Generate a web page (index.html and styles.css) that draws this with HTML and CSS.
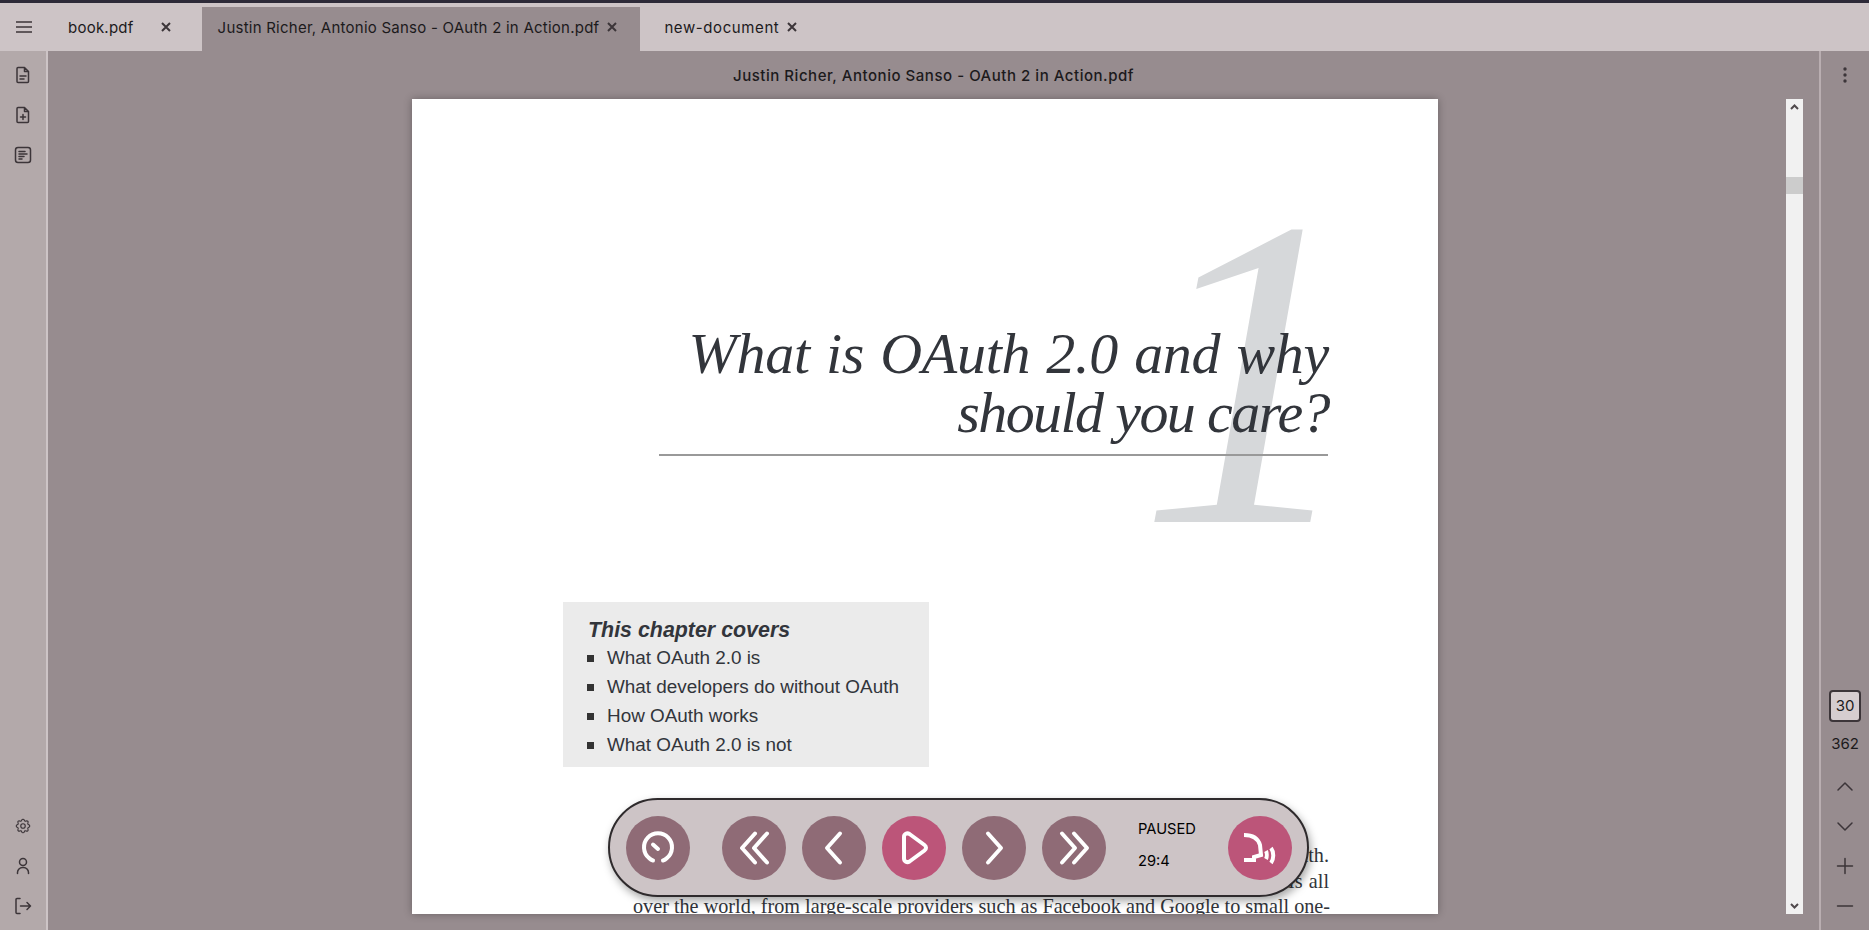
FILE: index.html
```html
<!DOCTYPE html>
<html lang="en">
<head>
    <meta charset="UTF-8">
    <title>OAuth 2 in Action.pdf</title>
    <link rel="stylesheet" href="styles.css">
</head>
<body>
    <div class="top-stripe"></div>

    <header class="tabbar">
        <button class="menu-btn" aria-label="Menu">
            <svg width="18" height="12" viewBox="0 0 18 12"><path d="M1 1h16M1 6h16M1 11h16"/></svg>
        </button>
        <div class="tab tab-first">
            <span>book.pdf</span>
            <svg class="close" width="10" height="10" viewBox="0 0 10 10"><path d="M1 1l8 8M9 1l-8 8"/></svg>
        </div>
        <div class="tab tab-active">
            <span>Justin Richer, Antonio Sanso - OAuth 2 in Action.pdf</span>
            <svg class="close" width="10" height="10" viewBox="0 0 10 10"><path d="M1 1l8 8M9 1l-8 8"/></svg>
        </div>
        <div class="tab tab-last">
            <span>new-document</span>
            <svg class="close" width="10" height="10" viewBox="0 0 10 10"><path d="M1 1l8 8M9 1l-8 8"/></svg>
        </div>
    </header>

    <div class="workspace">
        <aside class="left-rail">
            <div class="rail-group">
                <svg class="rail-icon" width="18" height="18" viewBox="0 0 18 18"><path d="M4 1.500h6.500l4 4v10a1 1 0 0 1-1 1h-9.500a1 1 0 0 1-1-1v-13a1 1 0 0 1 1-1zM10.500 1.500v4h4M6 10h6M6 13h4"/></svg>
                <svg class="rail-icon" width="18" height="18" viewBox="0 0 18 18"><path d="M4 1.500h6.500l4 4v10a1 1 0 0 1-1 1h-9.500a1 1 0 0 1-1-1v-13a1 1 0 0 1 1-1zM10.500 1.500v4h4M9 8.500v5M6.500 11h5"/></svg>
                <svg class="rail-icon" width="18" height="18" viewBox="0 0 18 18"><rect x="1.500" y="1.500" width="15" height="15" rx="2.500"/><path d="M5 5.500h6M5 8h8M5 10.500h5M5 13h3"/></svg>
            </div>
            <div class="rail-group">
                <svg class="rail-icon" width="18" height="18" viewBox="0 0 24 24"><path d="M10.325 4.317c.426 -1.756 2.924 -1.756 3.35 0a1.724 1.724 0 0 0 2.573 1.066c1.543 -.94 3.31 .826 2.37 2.37a1.724 1.724 0 0 0 1.065 2.572c1.756 .426 1.756 2.924 0 3.35a1.724 1.724 0 0 0 -1.066 2.573c.94 1.543 -.826 3.31 -2.37 2.37a1.724 1.724 0 0 0 -2.572 1.065c-.426 1.756 -2.924 1.756 -3.35 0a1.724 1.724 0 0 0 -2.573 -1.066c-1.543 .94 -3.31 -.826 -2.37 -2.370a1.724 1.724 0 0 0 -1.065 -2.572c-1.756 -.426 -1.756 -2.924 0 -3.350a1.724 1.724 0 0 0 1.066 -2.573c-.94 -1.543 .826 -3.31 2.37 -2.370c1 .608 2.296 .07 2.572 -1.065z"/><circle cx="12" cy="12" r="3"/></svg>
                <svg class="rail-icon" width="18" height="18" viewBox="0 0 18 18"><circle cx="9" cy="5" r="3.500"/><path d="M3.500 16.500v-1a5 5 0 0 1 5-5h1a5 5 0 0 1 5 5v1"/></svg>
                <svg class="rail-icon" width="18" height="18" viewBox="0 0 18 18"><path d="M6 1.500h-3a1 1 0 0 0-1 1v13a1 1 0 0 0 1 1h3M6.500 9h10M13 5.500l3.500 3.500-3.500 3.500"/></svg>
            </div>
        </aside>

        <main class="reader">
            <div class="doc-title">Justin Richer, Antonio Sanso - OAuth 2 in Action.pdf</div>
            <div class="viewer">
                <article class="page">
                    <div class="chapter-num">1</div>
                    <h1 class="chapter-title">
                        <span class="title-line">What is OAuth 2.0 and why</span>
                        <span class="title-line title-tight">should you care?</span>
                    </h1>
                    <hr class="chapter-rule">
                    <section class="covers">
                        <h3>This chapter covers</h3>
                        <ul>
                            <li>What OAuth 2.0 is</li>
                            <li>What developers do without OAuth</li>
                            <li>How OAuth works</li>
                            <li>What OAuth 2.0 is not</li>
                        </ul>
                    </section>
                    <p class="page-text">
                        <span>If you’re a software developer on the web today, chances are you’ve heard of OAuth.</span>
                        <span>It is a security protocol used to protect a vast (and growing) number of web APIs all</span>
                        <span>over the world, from large-scale providers such as Facebook and Google to small one-</span>
                    </p>
                </article>
                <div class="scrollbar">
                    <svg width="17" height="16" viewBox="0 0 17 16"><path d="M5 10l3.500-3.500 3.500 3.500"/></svg>
                    <div class="scroll-thumb"></div>
                    <svg class="scroll-down" width="17" height="16" viewBox="0 0 17 16"><path d="M5 6l3.500 3.500 3.500-3.500"/></svg>
                </div>
            </div>

            <div class="player">
                <button class="round-btn btn-speed" aria-label="Speed">
                    <svg width="64" height="64" viewBox="0 0 64 64"><path d="M27 44.500q-2-.5-4-2.500a14 14 0 1 1 18 0q-2 2-4 2.500M27 28.500l5 4.500"/></svg>
                </button>
                <div class="player-controls">
                    <button class="round-btn" aria-label="Back fast">
                        <svg width="64" height="64" viewBox="0 0 64 64"><path d="M33 17.500l-13 14.500 13 14.500M45 17.500l-13 14.500 13 14.500"/></svg>
                    </button>
                    <button class="round-btn" aria-label="Back">
                        <svg width="64" height="64" viewBox="0 0 64 64"><path d="M38 17.500l-13 14.500 13 14.500"/></svg>
                    </button>
                    <button class="round-btn btn-pink" aria-label="Play">
                        <svg width="64" height="64" viewBox="0 0 64 64"><path d="M22 21c0-3 3-4.500 5.500-3l15 11c2 1.500 2 4 0 5.500l-15 11c-2.500 1.500-5.500 0-5.500-3z"/></svg>
                    </button>
                    <button class="round-btn" aria-label="Forward">
                        <svg width="64" height="64" viewBox="0 0 64 64"><path d="M26 17.500l13 14.500-13 14.500"/></svg>
                    </button>
                    <button class="round-btn" aria-label="Forward fast">
                        <svg width="64" height="64" viewBox="0 0 64 64"><path d="M20 17.500l13 14.500-13 14.500M32 17.500l13 14.500-13 14.500"/></svg>
                    </button>
                </div>
                <div class="player-status">
                    <span>PAUSED</span>
                    <span>29:4</span>
                </div>
                <button class="round-btn btn-pink btn-voice" aria-label="Voice">
                    <svg width="64" height="64" viewBox="0 0 64 64"><path d="M16 19c8 0 14 3 16 10l1 10-7 2v3h-10"/><path d="M38 35c1 2 1 6 0 8M43 32c3 4 3 11 0 15"/></svg>
                </button>
            </div>
        </main>

        <aside class="right-rail">
            <svg class="kebab" width="4" height="16" viewBox="0 0 4 16"><circle cx="2" cy="2" r="1.700"/><circle cx="2" cy="8" r="1.700"/><circle cx="2" cy="14" r="1.700"/></svg>
            <div class="pager">
                <div class="page-input">30</div>
                <div class="page-total">362</div>
                <svg class="rail-icon" width="18" height="18" viewBox="0 0 18 18"><path d="M2 13l7-7 7 7"/></svg>
                <svg class="rail-icon" width="18" height="18" viewBox="0 0 18 18"><path d="M2 6l7 7 7-7"/></svg>
                <svg class="rail-icon" width="18" height="18" viewBox="0 0 18 18"><path d="M9 1.500v15M1.500 9h15"/></svg>
                <svg class="rail-icon" width="18" height="18" viewBox="0 0 18 18"><path d="M1.500 9h15"/></svg>
            </div>
        </aside>
    </div>
</body>
</html>
```

FILE: styles.css
```css
* {
    box-sizing: border-box;
}

html, body {
    height: 100%;
}

body {
    margin: 0;
    display: flex;
    flex-direction: column;
    overflow: hidden;
    background: #978c8f;
    color: #1c1a1c;
    font-family: 'Inter', sans-serif;
    font-size: 15px;
}

button {
    border: none;
    padding: 0;
    background: none;
    cursor: pointer;
}

svg {
    display: block;
    fill: none;
}

.top-stripe {
    height: 3px;
    background: #2d2a38;
}

/* tabs */
.tabbar {
    height: 48px;
    display: flex;
    background: #cdc4c6;
}

.menu-btn {
    width: 48px;
    display: flex;
    align-items: center;
    justify-content: center;
}

.menu-btn svg path {
    stroke: #3c3539;
    stroke-width: 1.500;
}

.tab {
    display: flex;
    align-items: center;
    letter-spacing: 0.24px;
}

.tab .close path {
    stroke: #3c3539;
    stroke-width: 2;
}

.tab-first {
    padding: 0 31px 0 20px;
    gap: 27px;
}

.tab-active {
    margin-top: 4px;
    padding: 0 23px 4px 16px;
    gap: 8px;
    background: #978c8f;
}

.tab-last {
    padding: 0 24px;
    gap: 8px;
    letter-spacing: 0.6px;
}

/* side rails */
.workspace {
    flex: 1;
    min-height: 0;
    display: flex;
}

.left-rail {
    width: 48px;
    display: flex;
    flex-direction: column;
    justify-content: space-between;
    padding: 15px 0;
    background: #b3a9aa;
    border-right: 2px solid #cdc4c6;
}

.rail-group {
    display: flex;
    flex-direction: column;
    align-items: center;
    gap: 22px;
}

.rail-icon path,
.rail-icon rect,
.rail-icon circle {
    stroke: #3c3539;
    stroke-width: 1.500;
    stroke-linecap: round;
    stroke-linejoin: round;
}

.right-rail {
    width: 50px;
    display: flex;
    flex-direction: column;
    justify-content: space-between;
    align-items: center;
    padding: 16px 0 15px;
    border-left: 2px solid #b9aeb1;
}

.kebab circle {
    fill: #3c3539;
}

.pager {
    display: flex;
    flex-direction: column;
    align-items: center;
    gap: 22px;
}

.page-input {
    width: 32px;
    height: 32px;
    display: flex;
    align-items: center;
    justify-content: center;
    border: 2px solid #3c3539;
    border-radius: 4px;
    background: #d6cdcf;
    margin-bottom: -10px;
}

.page-total {
    margin-bottom: 1.500px;
    line-height: 20px;
}

/* center column */
.reader {
    flex: 1;
    min-width: 0;
    display: flex;
    flex-direction: column;
    position: relative;
}

.doc-title {
    height: 48px;
    display: flex;
    align-items: center;
    justify-content: center;
    font-weight: 500;
    letter-spacing: 0.53px;
}

.viewer {
    flex: 1;
    min-height: 0;
    display: flex;
    justify-content: space-between;
    padding: 0 16px 16px 364px;
}

.scrollbar {
    width: 17px;
    display: flex;
    flex-direction: column;
    background: #f1f1f1;
}

.scrollbar path {
    stroke: #504a4d;
    stroke-width: 2;
}

.scroll-thumb {
    height: 17px;
    margin-top: 62px;
    background: #cccccc;
}

.scroll-down {
    margin-top: auto;
}

/* pdf page */
.page {
    width: 1026px;
    position: relative;
    overflow: hidden;
    padding: 225px 109px 0 0;
    background: #fff;
    box-shadow: 0 0 8px rgba(0, 0, 0, 0.3);
    color: #32353b;
}

.chapter-num {
    position: absolute;
    top: 52px;
    right: 78px;
    font-family: 'Liberation Serif', serif;
    font-style: italic;
    font-size: 443px;
    line-height: 443px;
    color: #d6d8da;
}

.chapter-title {
    position: relative;
    margin: 0;
    text-align: right;
    font-family: 'Liberation Serif', serif;
    font-style: italic;
    font-weight: normal;
    font-size: 58px;
    line-height: 59px;
}

.title-line {
    display: block;
    letter-spacing: -0.3px;
    word-spacing: 2px;
}

.title-tight {
    letter-spacing: -1.6px;
    word-spacing: 0;
}

.chapter-rule {
    position: relative;
    height: 2px;
    margin: 12px 1px 0 247px;
    border: none;
    background: #999;
}

.covers {
    width: 366px;
    height: 165px;
    margin: 146px 0 0 151px;
    padding: 14.500px 0 0 24px;
    background: #ebebeb;
    font-family: 'Liberation Sans', sans-serif;
}

.covers h3 {
    margin: 0;
    padding-left: 1px;
    font-size: 21.400px;
    line-height: 27px;
    font-style: italic;
    font-weight: bold;
}

.covers ul {
    margin: 0;
    padding: 0;
    list-style: none;
}

.covers li {
    height: 29px;
    display: flex;
    align-items: center;
    gap: 13px;
    font-size: 18.900px;
}

.covers li::before {
    content: "";
    width: 7px;
    height: 7px;
    background: #333;
}

.page-text {
    margin: 76px 0 0 221px;
    font-family: 'Liberation Serif', serif;
    font-size: 20.200px;
    line-height: 25.500px;
}

.page-text span {
    display: block;
    white-space: nowrap;
    text-align: justify;
    text-align-last: justify;
}

/* player */
.player {
    position: absolute;
    left: 560px;
    bottom: 33px;
    width: 701px;
    height: 99px;
    display: flex;
    align-items: center;
    padding: 0 15px 0 16px;
    border: 2px solid #2e2a2c;
    border-radius: 50px;
    background: #cdc4c6;
    box-shadow: 2px 4px 8px rgba(0, 0, 0, 0.35);
}

.round-btn {
    width: 64px;
    height: 64px;
    flex: none;
    border-radius: 50%;
    background: #8f6b76;
}

.round-btn path {
    stroke: #fff;
    stroke-width: 4;
    stroke-linecap: round;
    stroke-linejoin: round;
}

.btn-pink {
    background: #bc5579;
}

.btn-voice path {
    stroke-linecap: butt;
    stroke-linejoin: miter;
}

.player-controls {
    display: flex;
    gap: 16px;
    margin-left: 32px;
}

.player-status {
    width: 90px;
    flex: none;
    margin-left: 32px;
    padding-bottom: 5px;
    display: flex;
    flex-direction: column;
    gap: 12px;
    font-size: 14.700px;
    line-height: 20px;
    color: #000;
}

.btn-voice {
    margin-left: auto;
}
```
